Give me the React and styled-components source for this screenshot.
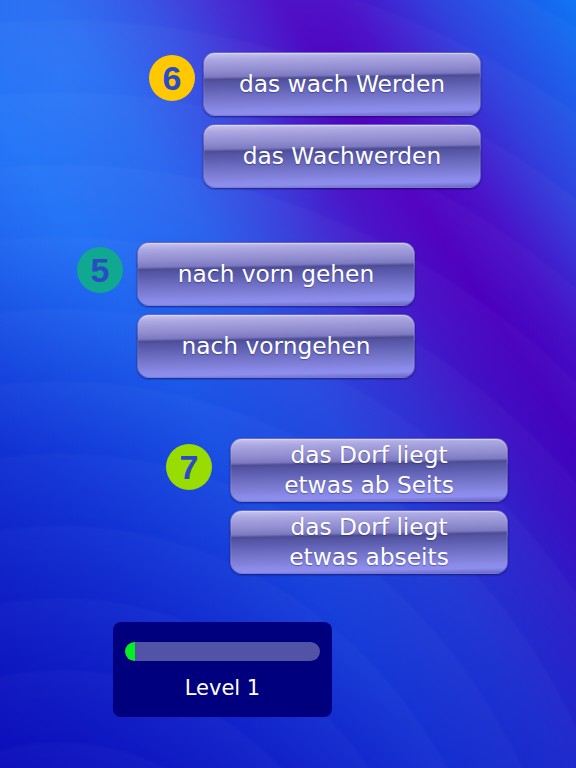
import styled, { createGlobalStyle } from "styled-components";

const GlobalStyle = createGlobalStyle`
  html, body {
    margin: 0;
    padding: 0;
    background: #0a1cc0;
  }
  * { box-sizing: border-box; }
`;

const groups = [
  {
    number: "6",
    color: "#ffc800",
    left: 149,
    top: 52,
    gap: 8,
    drop: 3,
    answers: ["das wach Werden", "das Wachwerden"],
  },
  {
    number: "5",
    color: "#10a890",
    left: 77,
    top: 54,
    gap: 14,
    drop: 5,
    answers: ["nach vorn gehen", "nach vorngehen"],
  },
  {
    number: "7",
    color: "#99dd00",
    left: 166,
    top: 60,
    gap: 18,
    drop: 6,
    answers: ["das Dorf liegt\netwas ab Seits", "das Dorf liegt\netwas abseits"],
  },
];

export default function App() {
  const progress = 5;
  return (
    <>
      <GlobalStyle />
      <Screen>
        {groups.map((g) => (
          <Group key={g.number} $left={g.left} $top={g.top} $gap={g.gap}>
            <Badge $color={g.color} $drop={g.drop}>
              {g.number}
            </Badge>
            <Answers>
              {g.answers.map((a) => (
                <AnswerButton key={a}>{a}</AnswerButton>
              ))}
            </Answers>
          </Group>
        ))}
        <LevelPanel>
          <Track>
            <Fill style={{ width: `${progress}%` }} />
          </Track>
          <LevelLabel>Level 1</LevelLabel>
        </LevelPanel>
      </Screen>
    </>
  );
}

const Screen = styled.div`
  width: 576px;
  height: 768px;
  overflow: hidden;
  display: flex;
  flex-direction: column;
  font-family: "DejaVu Sans", Verdana, sans-serif;
  background-image:
    repeating-radial-gradient(
      ellipse 900px 1000px at 60px 1030px,
      rgba(255, 255, 255, 0) 0px,
      rgba(255, 255, 255, 0.025) 62px,
      rgba(255, 255, 255, 0) 65px
    ),
    linear-gradient(
      to bottom,
      rgba(14, 0, 180, 0) 30%,
      rgba(14, 0, 180, 0.55) 100%
    ),
    radial-gradient(
      ellipse 280px 380px at 60px 80px,
      rgba(50, 140, 255, 0.55) 0%,
      rgba(50, 140, 255, 0) 100%
    ),
    linear-gradient(
      56deg,
      #0a1ec2 0%,
      #1448e2 25%,
      #1c66f2 40%,
      #2a58e8 52%,
      #3c34d6 61%,
      #4a14c8 67%,
      #5000bf 73%,
      #4a10c8 79%,
      #3040dc 87%,
      #0e74f4 100%
    );
`;

const Group = styled.div`
  display: flex;
  align-items: flex-start;
  gap: ${(p) => p.$gap}px;
  margin-top: ${(p) => p.$top}px;
  padding-left: ${(p) => p.$left}px;
`;

const Badge = styled.div`
  width: 46px;
  height: 46px;
  margin-top: ${(p) => p.$drop}px;
  border-radius: 50%;
  background: ${(p) => p.$color};
  display: flex;
  align-items: center;
  justify-content: center;
  color: #2a4ac8;
  font-family: "Liberation Sans", Arial, sans-serif;
  font-weight: 700;
  font-size: 34px;
  line-height: 1;
  flex-shrink: 0;
`;

const Answers = styled.div`
  display: flex;
  flex-direction: column;
  gap: 8px;
`;

const AnswerButton = styled.div`
  width: 278px;
  height: 64px;
  border-radius: 12px;
  border: 1px solid rgba(80, 80, 170, 0.6);
  background: linear-gradient(
    179deg,
    #cac6ee 0%,
    #aca8e2 10%,
    #8e8ace 28%,
    #7e7ac2 36%,
    #4c4c94 40%,
    #5454a2 44%,
    #6262b6 55%,
    #7676cc 70%,
    #8a8ae8 86%,
    #8e8ef0 92%,
    #6a68c4 100%
  );
  box-shadow:
    0 1px 2px rgba(0, 0, 70, 0.55),
    inset 0 1px 1px rgba(235, 230, 255, 0.6);
  display: flex;
  align-items: center;
  justify-content: center;
  padding: 0 10px;
  color: #ffffff;
  font-size: 23.3px;
  line-height: 30px;
  text-align: center;
  white-space: pre-line;
  text-shadow: 0 1px 1px rgba(20, 20, 90, 0.4);
`;

const LevelPanel = styled.div`
  margin-top: 48px;
  margin-left: 113px;
  width: 219px;
  height: 95px;
  border-radius: 8px;
  background: #00007e;
  padding: 20px 12px 0;
  display: flex;
  flex-direction: column;
  align-items: stretch;
`;

const Track = styled.div`
  height: 19px;
  border-radius: 10px;
  background: #5252a6;
  overflow: hidden;
`;

const Fill = styled.div`
  height: 100%;
  background: #00f020;
  border-radius: 10px 0 0 10px;
`;

const LevelLabel = styled.div`
  margin-top: 14px;
  text-align: center;
  color: #ffffff;
  font-size: 21px;
  line-height: 26px;
`;
